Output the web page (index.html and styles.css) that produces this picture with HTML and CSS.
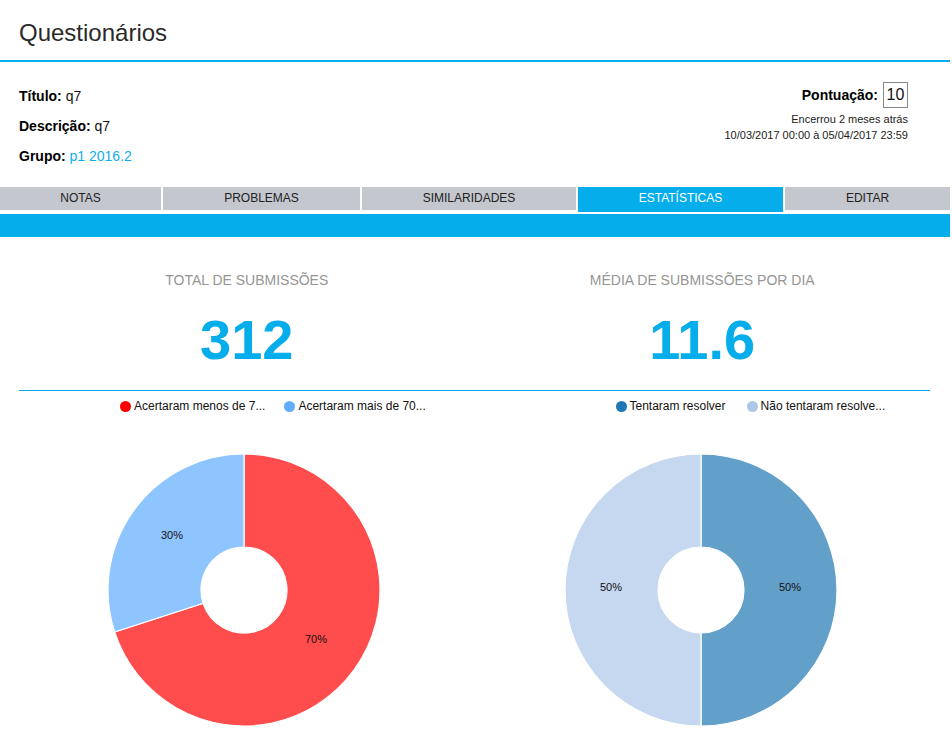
FILE: index.html
```html
<!DOCTYPE html>
<html lang="pt">
<head>
<meta charset="utf-8">
<title>Questionários</title>
<link rel="stylesheet" href="styles.css">
</head>
<body>
<div class="page">
<header class="page-header">
  <h1 class="page-title">Questionários</h1>
</header>

<section class="info">
  <div class="info-left">
    <p class="info-line"><b>Título:</b> q7</p>
    <p class="info-line"><b>Descrição:</b> q7</p>
    <p class="info-line"><b>Grupo:</b> <a class="link" href="#">p1 2016.2</a></p>
  </div>
  <div class="info-right">
    <div class="score-row">
      <b class="score-label">Pontuação:</b>
      <span class="score-box">10</span>
    </div>
    <div class="small-line">Encerrou 2 meses atrás</div>
    <div class="small-line">10/03/2017 00:00 à 05/04/2017 23:59</div>
  </div>
</section>

<nav class="tabs">
  <a class="tab" href="#">NOTAS</a>
  <a class="tab" href="#">PROBLEMAS</a>
  <a class="tab" href="#">SIMILARIDADES</a>
  <a class="tab tab-active" href="#">ESTATÍSTICAS</a>
  <a class="tab" href="#">EDITAR</a>
</nav>
<div class="tab-band"></div>

<main class="stats">
  <div class="stat-grid">
    <div class="stat">
      <div class="stat-title">TOTAL DE SUBMISSÕES</div>
      <div class="stat-value">312</div>
    </div>
    <div class="stat">
      <div class="stat-title">MÉDIA DE SUBMISSÕES POR DIA</div>
      <div class="stat-value">11.6</div>
    </div>
  </div>

  <div class="chart-grid">
    <div class="chart">
      <div class="legend legend-left">
        <span class="legend-item"><span class="dot dot-red"></span>Acertaram menos de 7...</span>
        <span class="legend-item"><span class="dot dot-blue"></span>Acertaram mais de 70...</span>
      </div>
      <svg class="donut donut-left" width="274" height="274" viewBox="-137 -137 274 274">
        <path class="slice s-red" d="M0,-136 A136,136 0 1 1 -129.34,42.03 L-40.90,13.29 A43,43 0 1 0 0,-43 Z"/>
        <path class="slice s-blue" d="M-129.34,42.03 A136,136 0 0 1 0,-136 L0,-43 A43,43 0 0 0 -40.90,13.29 Z"/>
        <text class="slice-label" x="-72" y="-55">30%</text>
        <text class="slice-label" x="72" y="49">70%</text>
      </svg>
    </div>
    <div class="chart">
      <div class="legend legend-right">
        <span class="legend-item"><span class="dot dot-dark"></span>Tentaram resolver</span>
        <span class="legend-item"><span class="dot dot-light"></span>Não tentaram resolve...</span>
      </div>
      <svg class="donut donut-right" width="274" height="274" viewBox="-137 -137 274 274">
        <path class="slice s-dark" d="M0,-136 A136,136 0 0 1 0,136 L0,43 A43,43 0 0 0 0,-43 Z"/>
        <path class="slice s-light" d="M0,136 A136,136 0 0 1 0,-136 L0,-43 A43,43 0 0 0 0,43 Z"/>
        <text class="slice-label" x="-90" y="-3">50%</text>
        <text class="slice-label" x="89" y="-3">50%</text>
      </svg>
    </div>
  </div>
</main>
</div>
</body>
</html>
```

FILE: styles.css
```css
* { box-sizing: border-box; }

html, body {
  margin: 0;
  padding: 0;
  background: #fff;
  font-family: "Liberation Sans", Arial, sans-serif;
  color: #111;
}

.page {
  width: 950px;
}

.page-header {
  height: 62px;
  padding: 19px 19px 0;
  border-bottom: 2px solid #05adeb;
}

.page-title {
  margin: 0;
  font-size: 24px;
  line-height: 28px;
  font-weight: normal;
  color: #2a2a2a;
}

.info {
  display: flex;
  justify-content: space-between;
  align-items: flex-start;
  padding: 20px 42px 21px 19px;
}

.info-line {
  margin: 10px 0 0;
  font-size: 14px;
  line-height: 20px;
}
.info-line:first-child { margin-top: 4px; }
.info-line b { color: #000; }

.link {
  color: #12aeec;
  text-decoration: none;
}

.info-right {
  display: flex;
  flex-direction: column;
  align-items: flex-end;
}

.score-row {
  display: flex;
  align-items: center;
  gap: 5px;
  margin-bottom: 3px;
}

.score-label {
  font-size: 14px;
  color: #000;
}

.score-box {
  display: block;
  height: 26px;
  width: 25px;
  border: 1px solid #888;
  font-size: 16px;
  line-height: 24px;
  text-align: center;
  color: #111;
}

.small-line {
  font-size: 11px;
  line-height: 16px;
  color: #222;
}

.tabs {
  display: grid;
  grid-template-columns: 161fr 197fr 214fr 205fr 165fr;
  column-gap: 2px;
  align-items: start;
}

.tab {
  display: block;
  height: 23px;
  background: #c4c7ce;
  color: #222;
  text-decoration: none;
  text-align: center;
  font-size: 12px;
  line-height: 23px;
}

.tab-active {
  height: 25px;
  background: #05adeb;
  color: #fff;
}

.tab-band {
  height: 23px;
  margin-top: 2px;
  background: #05adeb;
}

.stats {
  padding: 33px 20px 0 19px;
}

.stat-grid {
  display: grid;
  grid-template-columns: 1fr 1fr;
  border-bottom: 1px solid #05adeb;
  padding-bottom: 22px;
}

.stat {
  text-align: center;
}

.stat-title {
  font-size: 14px;
  line-height: 20px;
  color: #959595;
}

.stat-value {
  margin-top: 22px;
  font-size: 56px;
  line-height: 56px;
  font-weight: bold;
  color: #05adeb;
}

.chart-grid {
  display: grid;
  grid-template-columns: 1fr 1fr;
}

.chart {
  display: flex;
  flex-direction: column;
}

.legend {
  display: flex;
  margin-top: 7px;
  font-size: 12px;
  line-height: 16px;
  color: #111;
}
.legend-left { padding-left: 101px; gap: 19px; }
.legend-right { padding-left: 141px; gap: 21px; }

.legend-item {
  display: flex;
  align-items: center;
  gap: 3px;
}

.dot {
  display: block;
  width: 11px;
  height: 11px;
  border-radius: 50%;
}
.dot-red { background: #ff0000; }
.dot-blue { background: #60acff; }
.dot-dark { background: #1f77b4; }
.dot-light { background: #aec7e8; }

.donut {
  display: block;
  margin-top: 39px;
}
.donut-left { margin-left: 88px; }
.donut-right { margin-left: 89px; }

.slice {
  stroke: #fff;
  stroke-width: 1.2;
  fill-opacity: 0.7;
}
.s-red { fill: #ff0000; }
.s-blue { fill: #60acff; }
.s-dark { fill: #1f77b4; }
.s-light { fill: #aec7e8; }

.slice-label {
  font-family: "Liberation Sans", Arial, sans-serif;
  font-size: 11px;
  fill: #111;
  text-anchor: middle;
  dominant-baseline: central;
}
```
